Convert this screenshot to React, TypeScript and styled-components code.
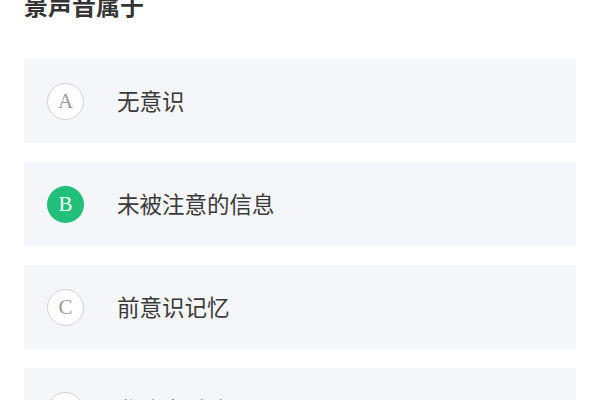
import { createGlobalStyle, styled } from "styled-components"

const GlobalStyle = createGlobalStyle`
    html, body {
        margin: 0;
        padding: 0;
        background: #ffffff;
        font-family: "Noto Sans CJK SC", "Noto Sans", sans-serif;
        overflow: hidden;
    }
`

const Page = styled.div`
    width: 600px;
    height: 400px;
    padding: 0 24px;
    box-sizing: border-box;
    overflow: hidden;
`

const Title = styled.h1`
    margin: -10px 0 0 0;
    height: 30px;
    line-height: 30px;
    font-size: 24px;
    font-weight: 700;
    color: #333333;
`

const OptionList = styled.div`
    display: flex;
    flex-direction: column;
    gap: 19px;
    margin-top: 39px;
`

const OptionCard = styled.div`
    display: flex;
    align-items: center;
    height: 84px;
    padding: 0 23px;
    background: #f5f6f9;
    border-radius: 2px;
    flex-shrink: 0;
`

const Badge = styled.div<{ $selected?: boolean }>`
    width: 37px;
    height: 37px;
    border-radius: 50%;
    box-sizing: border-box;
    display: flex;
    align-items: center;
    justify-content: center;
    flex-shrink: 0;
    font-family: "Liberation Serif", "DejaVu Serif", serif;
    font-size: 21px;
    color: ${p => (p.$selected ? "#ffffff" : "#9a9a9a")};
    background: ${p => (p.$selected ? "#21bf78" : "#ffffff")};
    border: ${p => (p.$selected ? "none" : "1.5px solid #d0d0d0")};
`

const OptionText = styled.span`
    margin-left: 33px;
    margin-top: -3px;
    font-size: 22.5px;
    color: #3a3a3a;
`

const options = [
    { key: "A", text: "无意识" },
    { key: "B", text: "未被注意的信息", selected: true },
    { key: "C", text: "前意识记忆" },
    { key: "D", text: "非注意过滤器" },
]

export default function App() {
    return (
        <Page>
            <GlobalStyle />
            <Title>景声音属于</Title>
            <OptionList>
                {options.map(o => (
                    <OptionCard key={o.key}>
                        <Badge $selected={o.selected}>{o.key}</Badge>
                        <OptionText>{o.text}</OptionText>
                    </OptionCard>
                ))}
            </OptionList>
        </Page>
    )
}
